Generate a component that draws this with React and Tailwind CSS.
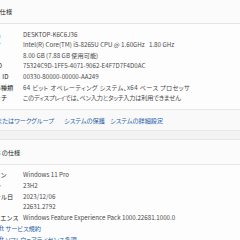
export default function App() {
  const font = "font-['Noto_Sans_CJK_JP','Noto_Sans',sans-serif]";
  const palt = "[font-feature-settings:'palt']";
  const devRows = [
    ["デバイス名", "DESKTOP-K6C6J36", ""],
    ["プロセッサ", "Intel(R) Core(TM) i5-8265U CPU @ 1.60GHz   1.80 GHz", ""],
    ["実装 RAM", "8.00 GB (7.88 GB 使用可能)", ""],
    ["デバイス ID", "75324C9D-1FF5-4071-9062-E4F7D7F4D0AC", ""],
    ["プロダクト ID", "00330-80000-00000-AA249", ""],
    ["システムの種類", "64 ビット オペレーティング システム、x64 ベース プロセッサ", "tracking-[0.35px]"],
    ["ペンとタッチ", "このディスプレイでは、ペン入力とタッチ入力は利用できません", "tracking-[-0.2px]"],
  ];
  const winRows = [
    ["エディション", "Windows 11 Pro"],
    ["バージョン", "23H2"],
    ["インストール日", "2023/12/06"],
    ["OS ビルド", "22631.2792"],
    ["エクスペリエンス", "Windows Feature Experience Pack 1000.22681.1000.0"],
  ];
  return (
    <div className={`w-[240px] h-[240px] overflow-hidden bg-[#f3f3f3] text-[6.2px] ${font}`}>
      <div className="ml-[-40px] w-[340px] flex flex-col">
        <div className="bg-[#fbfbfb] border-b border-[#e5e5e5] h-[24px] flex items-end pb-[8px] pl-[9px]">
          <span className="text-[#1b1b1b] leading-none">デバイスの仕様</span>
        </div>
        <div className="bg-[#fdfdfd] flex flex-col pt-[5px] pb-[6px] pl-[10px]">
          {devRows.map(([l, v, t]) => (
            <div key={l} className="flex items-center h-[10.6px]">
              <span className="w-[53px] shrink-0 text-[#1b1b1b] whitespace-nowrap">{l}</span>
              <span className={`text-[#4a4a4a] whitespace-pre ${palt} ${t}`}>{v}</span>
            </div>
          ))}
        </div>
        <div className={`bg-[#f9f9f9] border-t border-b border-[#e8e8e8] h-[22px] flex items-center gap-[10px] text-[#2a62ad] whitespace-nowrap ${palt}`}>
          <span className="w-[94px] shrink-0 text-right">ドメインまたはワークグループ</span>
          <span className="w-[36px] shrink-0">システムの保護</span>
          <span>システムの詳細設定</span>
        </div>
        <div className="h-[8px]" />
        <div className="bg-[#fbfbfb] border-t border-b border-[#e5e5e5] h-[26px] flex items-center pl-[14px]">
          <span className="text-[#1b1b1b]">Windows の仕様</span>
        </div>
        <div className="bg-[#fdfdfd] flex flex-col pt-[4px] pl-[10px]">
          {winRows.map(([l, v]) => (
            <div key={l} className="flex items-center h-[10.8px]">
              <span className="w-[53px] shrink-0 text-[#1b1b1b] whitespace-nowrap">{l}</span>
              <span className="text-[#4a4a4a] whitespace-pre">{v}</span>
            </div>
          ))}
          <div className={`flex items-center h-[10.8px] pl-[7px] text-[#2a62ad] whitespace-nowrap ${palt}`}>Microsoft サービス規約</div>
          <div className={`flex items-center h-[10.8px] pl-[7px] text-[#2a62ad] whitespace-nowrap ${palt}`}>Microsoft ソフトウェアライセンス条項</div>
        </div>
      </div>
    </div>
  );
}
